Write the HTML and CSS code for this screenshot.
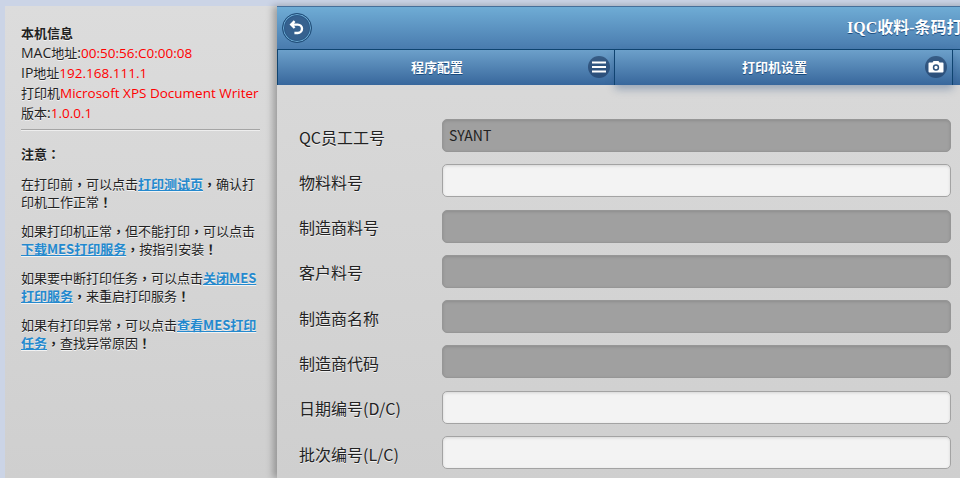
FILE: index.html
```html
<!DOCTYPE html>
<html lang="zh-CN">
<head>
<meta charset="utf-8">
<title>IQC收料-条码打印</title>
<link rel="stylesheet" href="styles.css">
</head>
<body>
<div class="page">
  <aside class="side">
    <div class="info">
      <div class="strong">本机信息</div>
      <div><span class="lat">MAC</span>地址<span class="lat">:</span><span class="red">00:50:56:C0:00:08</span></div>
      <div><span class="lat">IP</span>地址<span class="red">192.168.111.1</span></div>
      <div>打印机<span class="red">Microsoft XPS Document Writer</span></div>
      <div>版本<span class="lat">:</span><span class="red">1.0.0.1</span></div>
    </div>
    <hr class="rule">
    <div class="strong note">注意<span class="pt" lang="zh-TW">：</span></div>
    <p>在打印前<span class="pt" lang="zh-TW">，</span>可以点击<a href="#">打印测试页</a><span class="pt" lang="zh-TW">，</span>确认打印机工作正常<span class="pt" lang="zh-TW">！</span></p>
    <p>如果打印机正常<span class="pt" lang="zh-TW">，</span>但不能打印<span class="pt" lang="zh-TW">，</span>可以点击<a href="#">下载MES打印服务</a><span class="pt" lang="zh-TW">，</span>按指引安装<span class="pt" lang="zh-TW">！</span></p>
    <p>如果要中断打印任务<span class="pt" lang="zh-TW">，</span>可以点击<a href="#">关闭MES打印服务</a><span class="pt" lang="zh-TW">，</span>来重启打印服务<span class="pt" lang="zh-TW">！</span></p>
    <p>如果有打印异常<span class="pt" lang="zh-TW">，</span>可以点击<a href="#">查看MES打印任务</a><span class="pt" lang="zh-TW">，</span>查找异常原因<span class="pt" lang="zh-TW">！</span></p>
  </aside>
  <main class="main">
    <header class="head">
      <span class="back">
        <svg viewBox="0 0 22 22" width="22" height="22"><path d="M8.6 4.2 5.2 7.6l3.4 3.4M5.6 7.6h6.2a4 4 0 0 1 0 8.4H8.4" fill="none" stroke="#fff" stroke-width="2.4"/></svg>
      </span>
      <h1 class="title">IQC收料-条码打印</h1>
    </header>
    <nav class="tabs">
      <a class="tab">程序配置
        <span class="ico"><svg viewBox="0 0 22 22" width="22" height="22"><path d="M4 6.5h14M4 11h14M4 15.500h14" stroke="#fff" stroke-width="2.200" fill="none"/></svg></span>
      </a>
      <a class="tab on">打印机设置
        <span class="ico"><svg viewBox="0 0 22 22" width="22" height="22"><path fill="#fff" fill-rule="evenodd" d="M4.500 6.500h3l1-1.500h5l1 1.500h3a1 1 0 0 1 1 1v8a1 1 0 0 1-1 1h-13a1 1 0 0 1-1-1v-8a1 1 0 0 1 1-1ZM11 8.300a3.200 3.200 0 1 0 0 6.400 3.200 3.200 0 0 0 0-6.400Zm0 1.500a1.700 1.700 0 1 1 0 3.400 1.700 1.700 0 0 1 0-3.400Z"/></svg></span>
      </a>
      <a class="tab rest"></a>
    </nav>
    <form class="form">
      <div class="row"><label>QC员工工号</label><div class="field off">SYANT</div></div>
      <div class="row"><label>物料料号</label><div class="field"></div></div>
      <div class="row"><label>制造商料号</label><div class="field off"></div></div>
      <div class="row"><label>客户料号</label><div class="field off"></div></div>
      <div class="row"><label>制造商名称</label><div class="field off"></div></div>
      <div class="row"><label>制造商代码</label><div class="field off"></div></div>
      <div class="row"><label>日期编号(D/C)</label><div class="field"></div></div>
      <div class="row"><label>批次编号(L/C)</label><div class="field"></div></div>
    </form>
  </main>
</div>
</body>
</html>
```
FILE: styles.css
```css
* { box-sizing: border-box; }
html, body { margin: 0; height: 478px; overflow: hidden; }
body {
  background: #cbd4e6;
  font-family: "Noto Sans CJK SC", "Open Sans", sans-serif;
  font-weight: 400;
  color: #222;
}
.page {
  display: flex;
  height: 478px;
  width: 1100px;
  padding: 6px 0 0 5px;
}
.side {
  width: 272px;
  flex: none;
  padding: 17px 17px 0 16px;
  background: linear-gradient(#dcdcdc, #cfcfcf);
  font-size: 13px;
  line-height: 20px;
  text-shadow: 0 1px 0 #f3f3f3;
}
.info { font-size: 13px; }
.strong { font-weight: 700; font-size: 13px; }
.lat, .red { font-family: "Open Sans", sans-serif; font-size: 14px; }
.red { color: #f00; text-shadow: none; font-size: 13.500px; }
.rule {
  margin: 6px 0 13px;
  height: 2px;
  border: 0;
  border-top: 1px solid #a5a5a5;
  border-bottom: 1px solid #eee;
}
.note { margin-bottom: 11px; }
.side p { margin: 0 0 12px; line-height: 17.500px; }
.side a { color: #2489ce; font-weight: 700; text-decoration: underline; }
.pt { font-family: "Noto Sans CJK TC", sans-serif; font-weight: 700; }
.main {
  flex: none;
  width: 823px;
  background: linear-gradient(#dadada, #cfcfcf);
  box-shadow: -4px 0 7px rgba(0, 0, 0, .28);
  position: relative;
}
.head {
  height: 43px;
  display: flex;
  align-items: center;
  padding-left: 5px;
  border-top: 1px solid #456f9a;
  background: linear-gradient(#6facd5, #497bae);
}
.back {
  width: 30px;
  height: 30px;
  border-radius: 50%;
  flex: none;
  display: flex;
  align-items: center;
  justify-content: center;
  background: #36618f;
  border: 1px solid #1f4d78;
  box-shadow: 0 0 0 1px #6facd5 inset, 0 0 0 2px #2a5a89 inset;
}
.title {
  margin: 0 0 0 535px;
  font-family: "Liberation Serif", "Noto Sans CJK SC", serif;
  font-size: 16px;
  line-height: 20px;
  font-weight: 700;
  color: #fff;
  white-space: nowrap;
  text-shadow: 0 1px 0 #194b7e;
}
.tabs {
  display: flex;
  height: 36px;
  border-top: 1px solid #0f4470;
  border-left: 1px solid #0f4470;
}
.tab {
  position: relative;
  flex: none;
  width: 338px;
  height: 35px;
  display: flex;
  align-items: center;
  justify-content: center;
  padding: 0 18px 3px 0;
  color: #fff;
  font-size: 13px;
  font-weight: 700;
  text-shadow: 0 1px 0 #194b7e;
  background: linear-gradient(#6ca0ca, #38679c);
  border-right: 1px solid #0f4470;
}
.tab:first-child { width: 337px; }
.tab.on { box-shadow: 0 4px 8px rgba(30, 70, 120, .35); z-index: 1; }
.tab.rest { width: 120px; }
.ico {
  position: absolute;
  right: 4px;
  top: 6px;
  width: 22px;
  height: 22px;
  border-radius: 50%;
  background: rgba(30, 60, 100, .65);
}
.tab.on .ico { right: 5px; }
.ico svg { display: block; }
.form {
  display: flex;
  flex-direction: column;
  gap: 12.300px;
  padding: 34px 0 0 22px;
}
.row {
  display: flex;
  align-items: center;
  height: 33px;
}
.row label {
  width: 143px;
  flex: none;
  font-size: 16px;
  line-height: 22px;
  color: #222;
  text-shadow: 0 1px 0 #f0f0f0;
  padding-top: 2px;
}
.field {
  width: 509px;
  height: 33px;
  border: 1px solid #a3a3a3;
  border-radius: 5px;
  background: #f3f3f3;
  box-shadow: inset 0 1px 3px rgba(0, 0, 0, .12);
  font-size: 14px;
  line-height: 30px;
  padding-left: 6px;
  color: #222;
}
.field.off {
  background: #a0a0a0;
  border-color: #969696;
}
```
